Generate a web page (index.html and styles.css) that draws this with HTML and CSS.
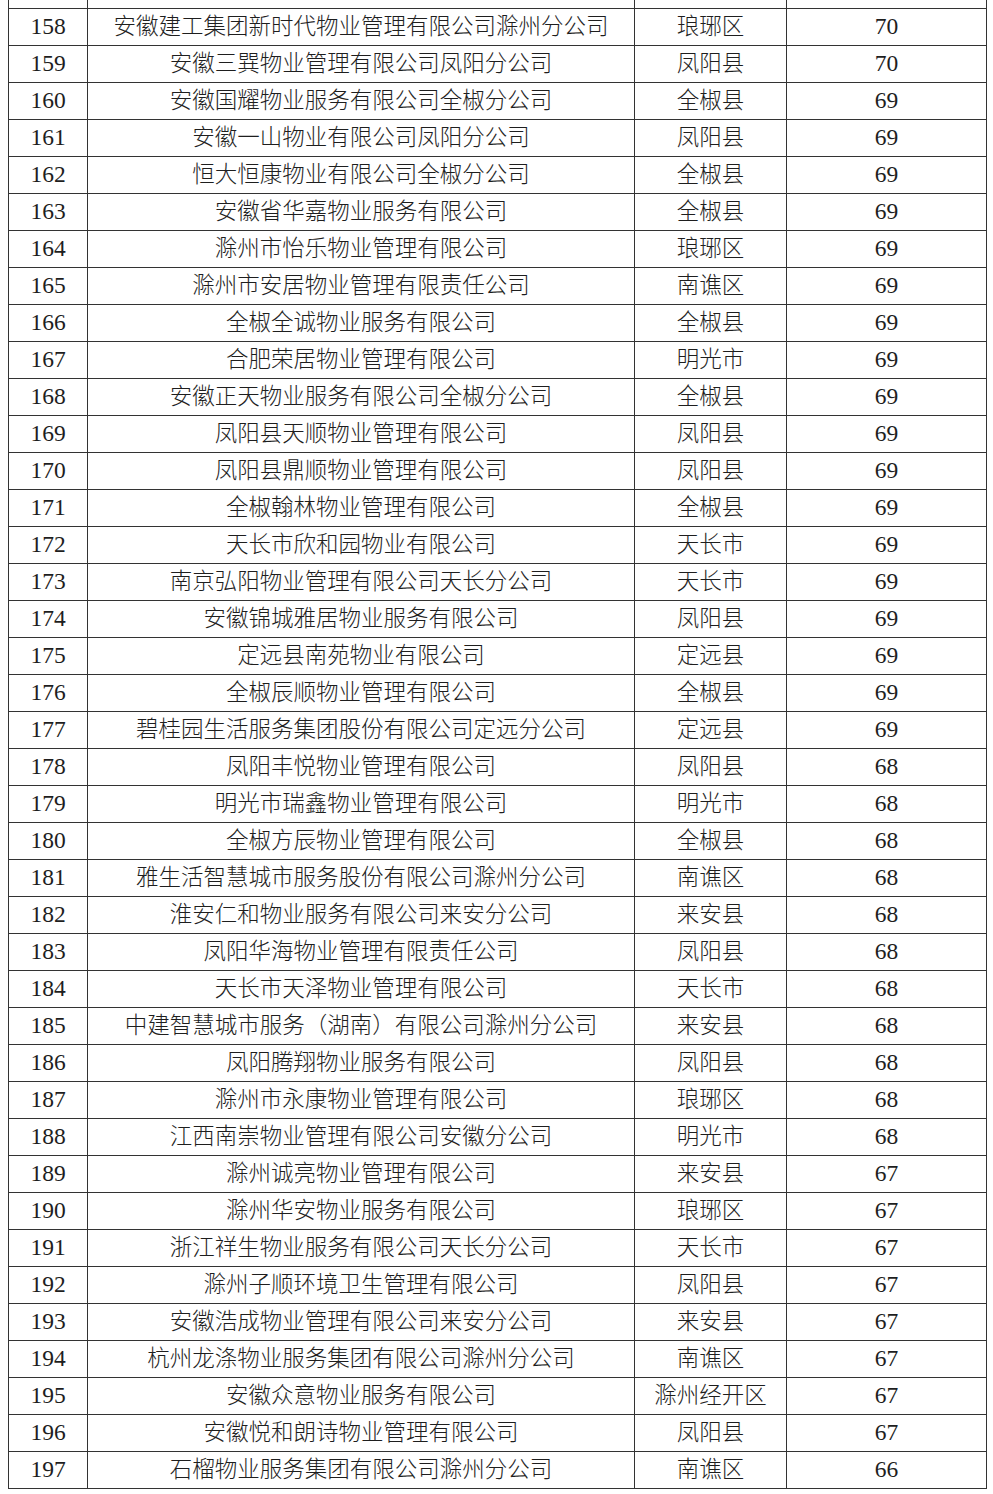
FILE: index.html
```html
<!DOCTYPE html>
<html lang="zh-CN">
<head>
<meta charset="utf-8">
<title>物业服务企业名单</title>
<link rel="stylesheet" href="styles.css">
</head>
<body>
<div class="page">
<table class="list">
<colgroup><col class="c-no"><col class="c-name"><col class="c-area"><col class="c-score"></colgroup>
<thead>
<tr><th>序号</th><th>物业服务企业名称</th><th>区域</th><th>总得分</th></tr>
</thead>
<tbody>
<tr><td class="num">158</td><td>安徽建工集团新时代物业管理有限公司滁州分公司</td><td>琅琊区</td><td class="num">70</td></tr>
<tr><td class="num">159</td><td>安徽三巽物业管理有限公司凤阳分公司</td><td>凤阳县</td><td class="num">70</td></tr>
<tr><td class="num">160</td><td>安徽国耀物业服务有限公司全椒分公司</td><td>全椒县</td><td class="num">69</td></tr>
<tr><td class="num">161</td><td>安徽一山物业有限公司凤阳分公司</td><td>凤阳县</td><td class="num">69</td></tr>
<tr><td class="num">162</td><td>恒大恒康物业有限公司全椒分公司</td><td>全椒县</td><td class="num">69</td></tr>
<tr><td class="num">163</td><td>安徽省华嘉物业服务有限公司</td><td>全椒县</td><td class="num">69</td></tr>
<tr><td class="num">164</td><td>滁州市怡乐物业管理有限公司</td><td>琅琊区</td><td class="num">69</td></tr>
<tr><td class="num">165</td><td>滁州市安居物业管理有限责任公司</td><td>南谯区</td><td class="num">69</td></tr>
<tr><td class="num">166</td><td>全椒全诚物业服务有限公司</td><td>全椒县</td><td class="num">69</td></tr>
<tr><td class="num">167</td><td>合肥荣居物业管理有限公司</td><td>明光市</td><td class="num">69</td></tr>
<tr><td class="num">168</td><td>安徽正天物业服务有限公司全椒分公司</td><td>全椒县</td><td class="num">69</td></tr>
<tr><td class="num">169</td><td>凤阳县天顺物业管理有限公司</td><td>凤阳县</td><td class="num">69</td></tr>
<tr><td class="num">170</td><td>凤阳县鼎顺物业管理有限公司</td><td>凤阳县</td><td class="num">69</td></tr>
<tr><td class="num">171</td><td>全椒翰林物业管理有限公司</td><td>全椒县</td><td class="num">69</td></tr>
<tr><td class="num">172</td><td>天长市欣和园物业有限公司</td><td>天长市</td><td class="num">69</td></tr>
<tr><td class="num">173</td><td>南京弘阳物业管理有限公司天长分公司</td><td>天长市</td><td class="num">69</td></tr>
<tr><td class="num">174</td><td>安徽锦城雅居物业服务有限公司</td><td>凤阳县</td><td class="num">69</td></tr>
<tr><td class="num">175</td><td>定远县南苑物业有限公司</td><td>定远县</td><td class="num">69</td></tr>
<tr><td class="num">176</td><td>全椒辰顺物业管理有限公司</td><td>全椒县</td><td class="num">69</td></tr>
<tr><td class="num">177</td><td>碧桂园生活服务集团股份有限公司定远分公司</td><td>定远县</td><td class="num">69</td></tr>
<tr><td class="num">178</td><td>凤阳丰悦物业管理有限公司</td><td>凤阳县</td><td class="num">68</td></tr>
<tr><td class="num">179</td><td>明光市瑞鑫物业管理有限公司</td><td>明光市</td><td class="num">68</td></tr>
<tr><td class="num">180</td><td>全椒方辰物业管理有限公司</td><td>全椒县</td><td class="num">68</td></tr>
<tr><td class="num">181</td><td>雅生活智慧城市服务股份有限公司滁州分公司</td><td>南谯区</td><td class="num">68</td></tr>
<tr><td class="num">182</td><td>淮安仁和物业服务有限公司来安分公司</td><td>来安县</td><td class="num">68</td></tr>
<tr><td class="num">183</td><td>凤阳华海物业管理有限责任公司</td><td>凤阳县</td><td class="num">68</td></tr>
<tr><td class="num">184</td><td>天长市天泽物业管理有限公司</td><td>天长市</td><td class="num">68</td></tr>
<tr><td class="num">185</td><td>中建智慧城市服务（湖南）有限公司滁州分公司</td><td>来安县</td><td class="num">68</td></tr>
<tr><td class="num">186</td><td>凤阳腾翔物业服务有限公司</td><td>凤阳县</td><td class="num">68</td></tr>
<tr><td class="num">187</td><td>滁州市永康物业管理有限公司</td><td>琅琊区</td><td class="num">68</td></tr>
<tr><td class="num">188</td><td>江西南崇物业管理有限公司安徽分公司</td><td>明光市</td><td class="num">68</td></tr>
<tr><td class="num">189</td><td>滁州诚亮物业管理有限公司</td><td>来安县</td><td class="num">67</td></tr>
<tr><td class="num">190</td><td>滁州华安物业服务有限公司</td><td>琅琊区</td><td class="num">67</td></tr>
<tr><td class="num">191</td><td>浙江祥生物业服务有限公司天长分公司</td><td>天长市</td><td class="num">67</td></tr>
<tr><td class="num">192</td><td>滁州子顺环境卫生管理有限公司</td><td>凤阳县</td><td class="num">67</td></tr>
<tr><td class="num">193</td><td>安徽浩成物业管理有限公司来安分公司</td><td>来安县</td><td class="num">67</td></tr>
<tr><td class="num">194</td><td>杭州龙涤物业服务集团有限公司滁州分公司</td><td>南谯区</td><td class="num">67</td></tr>
<tr><td class="num">195</td><td>安徽众意物业服务有限公司</td><td>滁州经开区</td><td class="num">67</td></tr>
<tr><td class="num">196</td><td>安徽悦和朗诗物业管理有限公司</td><td>凤阳县</td><td class="num">67</td></tr>
<tr><td class="num">197</td><td>石榴物业服务集团有限公司滁州分公司</td><td>南谯区</td><td class="num">66</td></tr>
</tbody>
</table>
</div>
</body>
</html>
```
FILE: styles.css
```css
html, body {
  margin: 0;
  padding: 0;
  background: #ffffff;
}
.page {
  padding-left: 8px;
  overflow: hidden;
  height: 1494px;
}
.list {
  border-collapse: collapse;
  table-layout: fixed;
  width: 978px;
  margin-top: -29px;
  font-family: "Liberation Serif", "Noto Sans CJK SC", serif;
  font-size: 22.5px;
  font-weight: 300;
  color: #1e1e1e;
}
.c-no { width: 79px; }
.c-name { width: 547px; }
.c-area { width: 152px; }
.c-score { width: 200px; }
.list th,
.list td {
  border: 1.5px solid #333333;
  height: 36px;
  padding: 0;
  text-align: center;
  vertical-align: middle;
  white-space: nowrap;
  line-height: 1;
}
.list th {
  font-weight: 300;
}
.list td.num {
  font-size: 23.5px;
  font-weight: 400;
}
```
